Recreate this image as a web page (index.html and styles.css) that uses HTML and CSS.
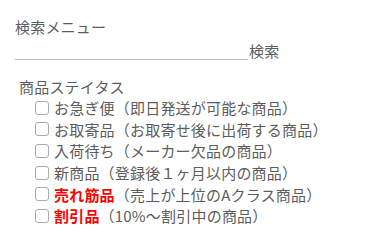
FILE: index.html
```html
<!DOCTYPE html>
<html lang="ja">
<head>
<meta charset="utf-8">
<link rel="stylesheet" href="styles.css">
</head>
<body>
<div class="menu">
  <div class="title">検索メニュー</div>
  <div class="search">
    <span class="field"></span><span class="btn">検索</span>
  </div>
  <div class="status">
    <div class="status-title">商品ステイタス</div>
    <ul class="list">
      <li><span class="box"></span>お急ぎ便（即日発送が可能な商品）</li>
      <li><span class="box"></span>お取寄品（お取寄せ後に出荷する商品）</li>
      <li><span class="box"></span>入荷待ち（メーカー欠品の商品）</li>
      <li><span class="box"></span>新商品（登録後１ヶ月以内の商品）</li>
      <li><span class="box"></span><b class="red">売れ筋品</b>（売上が上位のAクラス商品）</li>
      <li><span class="box"></span><b class="red">割引品</b>（10%～割引中の商品）</li>
    </ul>
  </div>
</div>
</body>
</html>
```
FILE: styles.css
```css
html, body {
  margin: 0;
  padding: 0;
  background: #fff;
}
body {
  font-family: "Noto Sans CJK JP", "Noto Sans", sans-serif;
  font-size: 15px;
  letter-spacing: 0.2px;
  color: #5c5c5c;
}
.menu {
  padding: 17px 0 0 15px;
}
.title {
  line-height: 20px;
}
.search {
  display: flex;
  align-items: flex-end;
  margin-top: 4px;
}
.field {
  width: 233px;
  height: 0;
  border-bottom: 1px solid #bbb;
  margin-bottom: 1px;
}
.btn {
  line-height: 20px;
  margin-left: 1px;
}
.status {
  margin-top: 16px;
  padding-left: 4px;
}
.status-title {
  line-height: 20px;
}
.list {
  list-style: none;
  margin: 0;
  padding: 0 0 0 16px;
}
.list li {
  display: flex;
  align-items: center;
  height: 21.6px;
}
.box {
  width: 12px;
  height: 12px;
  border: 1px solid #aaa;
  border-radius: 3px;
  margin-right: 5px;
  flex: none;
}
.red {
  color: #f00;
  font-weight: bold;
}
```
